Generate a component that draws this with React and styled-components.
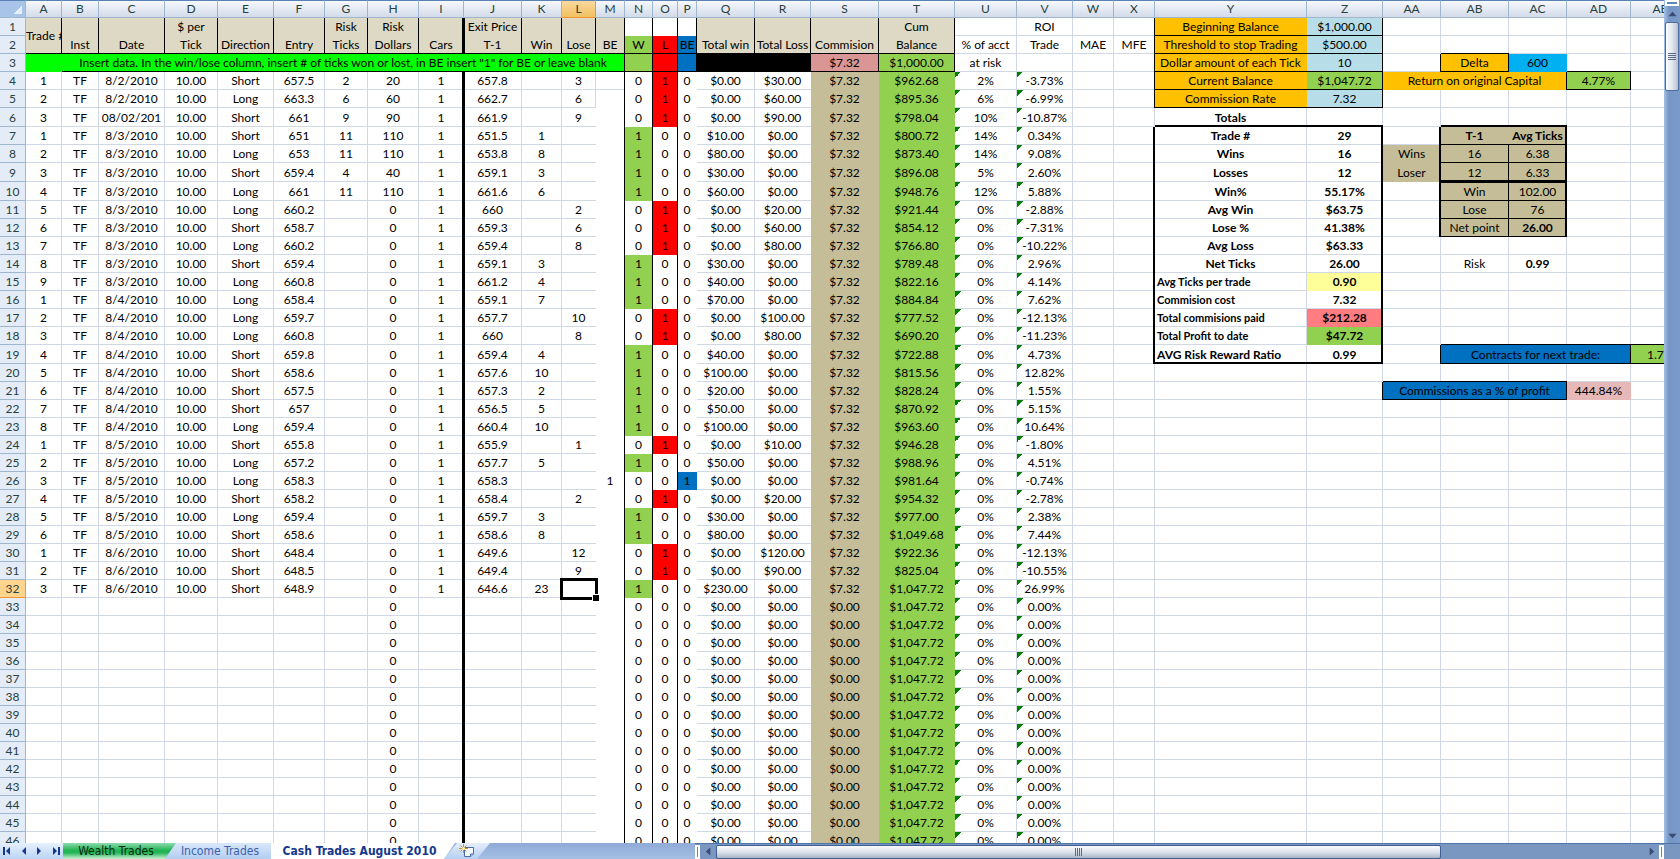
import React from "react";
import styled, { createGlobalStyle, css } from "styled-components";

const GRID = "#d0d7e5";
const SAND = "#ddd9c4";
const TAN = "#c4bd97";
const GREEN = "#92d050";
const RED = "#ff0000";
const BLUE = "#0070c0";
const GOLD = "#ffc000";
const SKY = "#b7dee8";
const LIME = "#00ff00";

const COLUMNS = [
  ["A", 36], ["B", 37], ["C", 66], ["D", 53], ["E", 56], ["F", 51], ["G", 43], ["H", 51],
  ["I", 45], ["J", 58], ["K", 40], ["L", 34], ["M", 29], ["N", 28], ["O", 25], ["P", 19],
  ["Q", 58], ["R", 56], ["S", 68], ["T", 76], ["U", 62], ["V", 56], ["W", 41], ["X", 41],
  ["Y", 152], ["Z", 76], ["AA", 58], ["AB", 68], ["AC", 58], ["AD", 64], ["AE", null],
];
const LETTERS = COLUMNS.map(([name]) => name);
const TALL_ROWS = [6, 9, 10, 19];
const ROW_COUNT = 46;
const ACTIVE = "L32";

/* trade, date, direction, entry, risk ticks, risk dollars, exit, win, lose, BE, total win, total loss, balance, at risk, ROI */
const TRADES = `
1|8/2/2010|Short|657.5|2|20|657.8||3||$0.00|$30.00|$962.68|2%|-3.73%
2|8/2/2010|Long|663.3|6|60|662.7||6||$0.00|$60.00|$895.36|6%|-6.99%
3|08/02/201|Short|661|9|90|661.9||9||$0.00|$90.00|$798.04|10%|-10.87%
1|8/3/2010|Short|651|11|110|651.5|1|||$10.00|$0.00|$800.72|14%|0.34%
2|8/3/2010|Long|653|11|110|653.8|8|||$80.00|$0.00|$873.40|14%|9.08%
3|8/3/2010|Short|659.4|4|40|659.1|3|||$30.00|$0.00|$896.08|5%|2.60%
4|8/3/2010|Long|661|11|110|661.6|6|||$60.00|$0.00|$948.76|12%|5.88%
5|8/3/2010|Long|660.2||0|660||2||$0.00|$20.00|$921.44|0%|-2.88%
6|8/3/2010|Short|658.7||0|659.3||6||$0.00|$60.00|$854.12|0%|-7.31%
7|8/3/2010|Long|660.2||0|659.4||8||$0.00|$80.00|$766.80|0%|-10.22%
8|8/3/2010|Short|659.4||0|659.1|3|||$30.00|$0.00|$789.48|0%|2.96%
9|8/3/2010|Long|660.8||0|661.2|4|||$40.00|$0.00|$822.16|0%|4.14%
1|8/4/2010|Long|658.4||0|659.1|7|||$70.00|$0.00|$884.84|0%|7.62%
2|8/4/2010|Long|659.7||0|657.7||10||$0.00|$100.00|$777.52|0%|-12.13%
3|8/4/2010|Long|660.8||0|660||8||$0.00|$80.00|$690.20|0%|-11.23%
4|8/4/2010|Short|659.8||0|659.4|4|||$40.00|$0.00|$722.88|0%|4.73%
5|8/4/2010|Short|658.6||0|657.6|10|||$100.00|$0.00|$815.56|0%|12.82%
6|8/4/2010|Short|657.5||0|657.3|2|||$20.00|$0.00|$828.24|0%|1.55%
7|8/4/2010|Short|657||0|656.5|5|||$50.00|$0.00|$870.92|0%|5.15%
8|8/4/2010|Long|659.4||0|660.4|10|||$100.00|$0.00|$963.60|0%|10.64%
1|8/5/2010|Short|655.8||0|655.9||1||$0.00|$10.00|$946.28|0%|-1.80%
2|8/5/2010|Long|657.2||0|657.7|5|||$50.00|$0.00|$988.96|0%|4.51%
3|8/5/2010|Long|658.3||0|658.3|||1|$0.00|$0.00|$981.64|0%|-0.74%
4|8/5/2010|Short|658.2||0|658.4||2||$0.00|$20.00|$954.32|0%|-2.78%
5|8/5/2010|Long|659.4||0|659.7|3|||$30.00|$0.00|$977.00|0%|2.38%
6|8/5/2010|Short|658.6||0|658.6|8|||$80.00|$0.00|$1,049.68|0%|7.44%
1|8/6/2010|Short|648.4||0|649.6||12||$0.00|$120.00|$922.36|0%|-12.13%
2|8/6/2010|Short|648.5||0|649.4||9||$0.00|$90.00|$825.04|0%|-10.55%
3|8/6/2010|Short|648.9||0|646.6|23|||$230.00|$0.00|$1,047.72|0%|26.99%`
  .trim()
  .split("\n")
  .map((line) => line.split("|"));

/* r, b, l, t are edge thicknesses: 0 hides the grid line, 1 or more draws black. */
const cells = {};
const set = (ref, props) => {
  cells[ref] = { ...cells[ref], ...props };
};

/* ledger header */
const HEADINGS = {
  B: ["", "Inst"], C: ["", "Date"], D: ["$ per", "Tick"], E: ["", "Direction"], F: ["", "Entry"],
  G: ["Risk", "Ticks"], H: ["Risk", "Dollars"], I: ["", "Cars"], J: ["Exit Price", "T-1"],
  K: ["", "Win"], L: ["", "Lose"], M: ["", "BE"], Q: ["", "Total win"], R: ["", "Total Loss"],
  S: ["", "Commision"], T: ["Cum", "Balance"],
};
set("A1", { v: "Trade #", fill: SAND, r: 1, b: 1, rows: 2, clip: true });
Object.entries(HEADINGS).forEach(([c, [top, bottom]]) => {
  set(c + 1, { v: top, fill: SAND, r: 1, b: 0 });
  set(c + 2, { v: bottom, fill: SAND, r: 1, b: 1 });
});
[["N", "W", GREEN], ["O", "L", RED], ["P", "BE", BLUE]].forEach(([c, v, fill]) => {
  set(c + 1, { r: 1, b: 0 });
  set(c + 2, { v, fill, r: 1, b: 1 });
  set(c + 3, { fill, r: 1, b: 1 });
});
set("A3", { fill: LIME, r: 0, b: 0 });
set("B3", {
  v: 'Insert data. In the win/lose column, insert # of ticks won or lost, in BE insert "1" for BE or leave blank',
  fill: LIME, span: 12, r: 1, b: 1,
});
set("Q3", { fill: "#000", r: 1, b: 1 });
set("R3", { fill: "#000", r: 1, b: 1 });
set("S3", { v: "$7.32", fill: "#da9694", r: 1, b: 1 });
set("T3", { v: "$1,000.00", fill: GREEN, r: 1, b: 1 });
set("U2", { v: "% of acct" });
set("U3", { v: "at risk" });
set("V1", { v: "ROI" });
set("V2", { v: "Trade" });
set("W2", { v: "MAE" });
set("X2", { v: "MFE" });
[1, 2].forEach((r) => set("I" + r, { r: 2 }));
[1, 2].forEach((r) => set("J" + r, { l: 1 }));

/* ledger body */
for (let r = 4; r <= ROW_COUNT; r += 1) {
  const t = TRADES[r - 4];
  const put = (c, v, more) => set(c + r, { v, ...more });
  if (t) {
    put("A", t[0]); put("B", "TF"); put("C", t[1]); put("D", "10.00"); put("E", t[2]);
    put("F", t[3]); put("G", t[4]); put("J", t[6]); put("K", t[7]);
  }
  put("H", t ? t[5] : "0");
  put("I", t ? "1" : "", { r: 2 });
  set("J" + r, { l: 1 });
  put("L", t ? t[8] : "", r > 5 ? { r: 0 } : {});
  put("M", t ? t[9] : "", { r: 1, ...(r > 4 ? { b: 0 } : {}) });
  const flag = (c, on, fill, edge) =>
    put(c, on ? "1" : "0", { fill: on ? fill : undefined, b: 0, r: edge });
  flag("N", t && t[7], GREEN, 1);
  flag("O", t && t[8], RED, 1);
  flag("P", t && t[9], BLUE, 0);
  put("Q", t ? t[10] : "$0.00");
  put("R", t ? t[11] : "$0.00", { r: 0 });
  put("S", t ? "$7.32" : "$0.00", { fill: TAN, r: 0, b: 0 });
  put("T", t ? t[12] : "$1,047.72", { fill: GREEN, r: 0, b: 0 });
  put("U", t ? t[13] : "0%", { flag: true });
  put("V", t ? t[14] : "0.00%", { flag: true });
}

/* account settings */
[
  ["Beginning Balance", "$1,000.00", SKY],
  ["Threshold to stop Trading", "$500.00", SKY],
  ["Dollar amount of each Tick", "10", SKY],
  ["Current Balance", "$1,047.72", GREEN],
  ["Commission Rate", "7.32", SKY],
].forEach(([label, value, fill], i) => {
  set("X" + (i + 1), { r: 1 });
  set("Y" + (i + 1), { v: label, fill: GOLD, r: 0, b: 1 });
  set("Z" + (i + 1), { v: value, fill, r: 1, b: 1 });
});

/* totals */
set("Y6", { v: "Totals", bold: true, b: 2 });
set("Z6", { b: 2 });
[
  ["Trade #", "29"], ["Wins", "16"], ["Losses", "12"], ["Win%", "55.17%"], ["Avg Win", "$63.75"],
  ["Lose %", "41.38%"], ["Avg Loss", "$63.33"], ["Net Ticks", "26.00"],
  ["Avg Ticks per trade", "0.90", "#ffff99"], ["Commision cost", "7.32"],
  ["Total commisions paid", "$212.28", "#ff7c80"], ["Total Profit to date", "$47.72", GREEN],
  ["AVG Risk Reward Ratio", "0.99"],
].forEach(([label, value, fill], i) => {
  const r = i + 7;
  set("X" + r, { r: 2 });
  set("Y" + r, { v: label, bold: true, left: r > 14, small: r > 14 && r < 19 });
  set("Z" + r, { v: value, bold: true, fill, r: 2, ...(fill ? { b: 0 } : {}) });
});
set("Y19", { b: 2 });
set("Z19", { b: 2 });

/* side panels */
set("AA3", { r: 1 });
set("AB2", { b: 1 });
set("AB3", { v: "Delta", fill: GOLD, r: 1, b: 1 });
set("AC3", { v: "600", fill: "#00b0f0", r: 0, b: 0 });
set("AD3", { b: 1 });
set("AA4", { v: "Return on original Capital", fill: GOLD, span: 3, r: 1, b: 0 });
set("AD4", { v: "4.77%", fill: GREEN, r: 1, b: 1 });
set("AB6", { b: 2 });
set("AC6", { b: 2 });
for (let r = 7; r <= 12; r += 1) set("AA" + r, { r: 2 });
set("AA8", { v: "Wins", fill: TAN, b: 0 });
set("AA9", { v: "Loser", fill: TAN, b: 0 });
[
  ["T-1", "Avg Ticks"], ["16", "6.38"], ["12", "6.33"],
  ["Win", "102.00"], ["Lose", "76"], ["Net point", "26.00"],
].forEach(([a, b], i) => {
  const r = i + 7;
  const edges = { fill: TAN, b: r === 9 ? 2 : 1, t: r === 10 ? 1 : undefined };
  set("AB" + r, { v: a, ...edges, r: r === 7 ? 0 : 1, bold: r === 7 });
  set("AC" + r, { v: b, ...edges, r: 2, bold: r === 7 || r === 12 });
});
set("AB14", { v: "Risk" });
set("AC14", { v: "0.99", bold: true });
["AB18", "AC18", "AD18", "AE18", "AA20", "AB20", "AC20"].forEach((ref) => set(ref, { b: 1 }));
set("AA19", { r: 1 });
set("AB19", { v: "Contracts for next trade:", fill: BLUE, span: 3, r: 1, b: 1 });
set("AE19", { v: "1.7", fill: GREEN, b: 1, left: true, indent: 16 });
set("Z21", { r: 1 });
set("AA21", { v: "Commissions as a % of profit", fill: BLUE, span: 3, r: 1, b: 1 });
set("AD21", { v: "444.84%", fill: "#e6b8b7", r: 0, b: 0 });

const Global = createGlobalStyle`
  * { box-sizing: border-box; }
  body { margin: 0; background: #fff; overflow: hidden; }
`;

const Workbook = styled.main`
  display: flex;
  flex-direction: column;
  height: 100vh;
  font: 12px/17px Lato, "Noto Sans", sans-serif;
  color: #000;
`;

const Pane = styled.div`
  display: flex;
  flex: 1;
  min-height: 0;
`;

const SheetView = styled.div`
  flex: 1;
  min-width: 0;
  overflow: hidden;
`;

const Sheet = styled.table`
  table-layout: fixed;
  width: 100%;
  min-width: 1690px;
  border-collapse: separate;
  border-spacing: 0;
`;

const Row = styled.tr`
  height: ${(p) => (p.$tall ? 19 : 18)}px;
`;

const ColumnHead = styled.th`
  height: 18px;
  padding: 0;
  font-weight: 400;
  line-height: 16px;
  color: #27413e;
  border-top: 1px solid #5b82b5;
  border-right: 1px solid ${(p) => (p.$active ? "#f29536" : "#9eb6ce")};
  border-bottom: 1px solid ${(p) => (p.$active ? "#f29536" : "#9eb6ce")};
  background: ${(p) =>
    p.$active ? "linear-gradient(#f9d99f, #f1c15f)" : "linear-gradient(#f6f9fd, #d3dbe9)"};
`;

const Corner = styled(ColumnHead)`
  background: linear-gradient(135deg, transparent 50%, #e6effa 50%) 14px 5px / 8px 8px no-repeat, #a9c4e9;
`;

const RowHead = styled.th`
  padding: 0;
  font-weight: 400;
  color: #27413e;
  vertical-align: bottom;
  border-right: 1px solid ${(p) => (p.$active ? "#f29536" : "#9eb6ce")};
  border-bottom: 1px solid ${(p) => (p.$active ? "#f29536" : "#9eb6ce")};
  background: ${(p) => (p.$active ? "#ffd58d" : "#e4ecf7")};
`;

/* Black edges come first so that they lie over the pale grid lines at the corners. */
const edges = (p) =>
  [
    p.$r > 0 && `inset -${p.$r}px 0 #000`,
    p.$b > 0 && `inset 0 -${p.$b}px #000`,
    p.$l && "inset 1px 0 #000",
    p.$t && "inset 0 1px #000",
    p.$r === undefined && `inset -1px 0 ${GRID}`,
    p.$b === undefined && `inset 0 -1px ${GRID}`,
  ]
    .filter(Boolean)
    .join(", ") || "none";

const Cell = styled.td`
  position: relative;
  padding: 0 1px 1px ${(p) => p.$indent || (p.$left ? 2 : 0)}px;
  text-align: ${(p) => (p.$left ? "left" : "center")};
  vertical-align: ${(p) => (p.$middle ? "middle" : "bottom")};
  white-space: nowrap;
  font-weight: ${(p) => (p.$bold ? 700 : 400)};
  font-size: ${(p) => (p.$small ? 11 : 12)}px;
  background: ${(p) => p.$fill || "#fff"};
  box-shadow: ${edges};
  ${(p) =>
    p.$flag &&
    css`
      background: linear-gradient(135deg, #008000 50%, transparent 50%) 0 0 / 6px 6px no-repeat, #fff;
    `}
`;

const Clip = styled.div`
  overflow: hidden;
`;

const Selection = styled.span`
  position: absolute;
  z-index: 1;
  inset: -2px;
  border: 3px solid #000;

  &::after {
    content: "";
    position: absolute;
    right: -4px;
    bottom: -4px;
    width: 6px;
    height: 6px;
    background: #000;
    border: 1px solid #fff;
    border-width: 1px 0 0 1px;
  }
`;

const VerticalBar = styled.div`
  display: flex;
  flex-direction: column;
  align-items: center;
  flex: none;
  width: 16px;
  background: linear-gradient(90deg, #a3c0e6, #7696c4 30%, #7a9bcb);
`;

const ScrollButton = styled.button`
  display: flex;
  flex: none;
  align-items: center;
  justify-content: center;
  width: 16px;
  height: 16px;
  padding: 0;
  border: 0;
  background: none;
`;

const SplitHandle = styled.div`
  flex: none;
  width: ${(p) => (p.$upright ? 5 : 14)}px;
  height: ${(p) => (p.$upright ? 14 : 6)}px;
  background: #fff;
  border: 2px solid #fff;
  box-shadow: inset 0 0 0 1px #5f86b8;
`;

const VerticalThumb = styled.div`
  display: flex;
  align-items: center;
  justify-content: center;
  width: 14px;
  height: 69px;
  border: 1px solid #4f6b9a;
  border-radius: 2px;
  background: linear-gradient(90deg, #fdfdfe, #e3e7ef 50%, #b5c0d3);
`;

const Spacer = styled.div`
  flex: 1;
`;

const BottomBar = styled.footer`
  display: flex;
  flex: none;
  height: 16px;
  background: linear-gradient(#8fabd6, #a5bfe4);
  overflow: hidden;
`;

const TabArea = styled.div`
  display: flex;
  flex: 695 1 0;
  min-width: 0;
`;

const Nav = styled.div`
  display: flex;
  width: 63px;
  flex: none;
  justify-content: space-around;
  background: linear-gradient(#e6f0fd, #bcd4f4);
`;

const NavButton = styled.button`
  width: 14px;
  padding: 0;
  border: 0;
  background: none;
  line-height: 0;
`;

const Tab = styled.button`
  position: relative;
  flex: none;
  width: ${(p) => p.$width}px;
  margin-right: -11px;
  padding: 0 11px 0 4px;
  border: 0;
  font: ${(p) => (p.$active ? 700 : 400)} 12px/16px "DejaVu Sans Condensed", "DejaVu Sans", sans-serif;
  color: ${(p) => (p.$green ? "#0b2a12" : p.$active ? "#15388a" : "#3a5fae")};
  white-space: nowrap;
  clip-path: polygon(${(p) => (p.$tucked ? "11px 0" : "0 0")}, 100% 0, calc(100% - 11px) 100%, 0 100%);
  background: ${(p) =>
    p.$green
      ? "linear-gradient(#8fdcae, #23b455 45%, #23b455 60%, #c8f0d5)"
      : p.$active
        ? "#fff"
        : "linear-gradient(#d9e8fb, #b3cdf0)"};
`;

const NewTab = styled.button`
  display: flex;
  align-items: center;
  justify-content: center;
  flex: none;
  width: 46px;
  padding: 0;
  border: 0;
  background: linear-gradient(#e4effd, #b5cff2);
  clip-path: polygon(13px 0, 100% 0, calc(100% - 13px) 100%, 0 100%);
`;

const HorizontalBar = styled.div`
  display: flex;
  flex: 985 1 0;
  min-width: 0;
  align-items: center;
  border-top: 1px solid #4f74a8;
  background: #7a97c2;
`;

const HorizontalThumb = styled.div`
  display: flex;
  align-items: center;
  justify-content: center;
  flex: 723 1 0;
  height: 14px;
  border: 1px solid #3f5f92;
  border-radius: 2px;
  background: linear-gradient(#fafbfd, #d9dfea 55%, #a9b5ca);
`;

const Track = styled.div`
  flex: 202 1 0;
`;

const BarEnd = styled.div`
  flex: none;
  width: 16px;
`;

const Arrow = ({ dir, color = "#3c4a6e", size = 9 }) => {
  const turn = { right: 0, down: 90, left: 180, up: 270 }[dir];
  return (
    <svg width={size} height={size} viewBox="0 0 10 10" aria-hidden="true">
      <path d="M3 0.5 L8 5 L3 9.5 Z" fill={color} transform={`rotate(${turn} 5 5)`} />
    </svg>
  );
};

const NavIcon = ({ end, flip }) => (
  <svg width="14" height="10" viewBox="0 0 14 10" aria-hidden="true">
    <g transform={flip ? "translate(14 0) scale(-1 1)" : undefined} fill="#15388a">
      <path d="M5 1 L9 5 L5 9 Z" />
      {end && <path d="M10 1 H12 V9 H10 Z" />}
    </g>
  </svg>
);

const Grip = ({ upright }) => (
  <svg width="8" height="8" viewBox="0 0 8 8" stroke="#5d6a85" aria-hidden="true">
    <path d={upright ? "M0.5 0V8M2.5 0V8M4.5 0V8M6.5 0V8" : "M0 0.5H8M0 2.5H8M0 4.5H8M0 6.5H8"} />
  </svg>
);

const NewSheetIcon = () => (
  <svg width="16" height="14" viewBox="0 0 16 14" aria-hidden="true">
    <path d="M5.5 3.5H14.5V10L11.5 12.5H5.5Z" fill="#f4f8ff" stroke="#4c6ca6" />
    <path d="M14.5 10H11.5V12.5" fill="#b5c9e8" stroke="#4c6ca6" />
    <path d="M4.5 0V9M0 4.5H9M1.5 1.5L7.5 7.5M7.5 1.5L1.5 7.5" stroke="#e08a1e" />
    <circle cx="4.5" cy="4.5" r="1.5" fill="#fff2b0" />
  </svg>
);

const SheetRow = ({ row }) => {
  const out = [];
  for (let i = 0; i < LETTERS.length; i += 1) {
    const ref = LETTERS[i] + row;
    if (ref === "A2") continue;
    const c = cells[ref] || {};
    out.push(
      <Cell
        key={ref}
        colSpan={c.span}
        rowSpan={c.rows}
        $fill={c.fill}
        $bold={c.bold}
        $small={c.small}
        $left={c.left}
        $indent={c.indent}
        $middle={c.clip}
        $flag={c.flag}
        $r={c.r}
        $b={c.b}
        $l={c.l}
        $t={c.t}
      >
        {c.clip ? <Clip>{c.v}</Clip> : c.v}
        {ref === ACTIVE && <Selection />}
      </Cell>
    );
    if (c.span) i += c.span - 1;
  }
  return (
    <Row $tall={TALL_ROWS.includes(row)}>
      <RowHead scope="row" $active={row === 32}>{row}</RowHead>
      {out}
    </Row>
  );
};

export default function App() {
  return (
    <Workbook>
      <Global />
      <Pane>
        <SheetView>
          <Sheet>
            <colgroup>
              <col width="26" />
              {COLUMNS.map(([name, width]) => (
                <col key={name} width={width || undefined} />
              ))}
            </colgroup>
            <thead>
              <tr>
                <Corner aria-label="Select all" />
                {LETTERS.map((name) => (
                  <ColumnHead key={name} scope="col" $active={name === "L"}>{name}</ColumnHead>
                ))}
              </tr>
            </thead>
            <tbody>
              {Array.from({ length: ROW_COUNT }, (_, i) => (
                <SheetRow key={i} row={i + 1} />
              ))}
            </tbody>
          </Sheet>
        </SheetView>
        <VerticalBar>
          <SplitHandle />
          <ScrollButton aria-label="Scroll up"><Arrow dir="up" /></ScrollButton>
          <VerticalThumb><Grip /></VerticalThumb>
          <Spacer />
          <ScrollButton aria-label="Scroll down"><Arrow dir="down" /></ScrollButton>
        </VerticalBar>
      </Pane>
      <BottomBar>
        <TabArea>
          <Nav>
            <NavButton aria-label="First sheet"><NavIcon end flip /></NavButton>
            <NavButton aria-label="Previous sheet"><NavIcon flip /></NavButton>
            <NavButton aria-label="Next sheet"><NavIcon /></NavButton>
            <NavButton aria-label="Last sheet"><NavIcon end /></NavButton>
          </Nav>
          <Tab $width={113} $green>Wealth Trades</Tab>
          <Tab $width={117} $tucked>Income Trades</Tab>
          <Tab $width={184} $active>Cash Trades August 2010</Tab>
          <NewTab aria-label="Insert worksheet"><NewSheetIcon /></NewTab>
        </TabArea>
        <HorizontalBar>
          <SplitHandle $upright />
          <ScrollButton aria-label="Scroll left"><Arrow dir="left" /></ScrollButton>
          <HorizontalThumb><Grip upright /></HorizontalThumb>
          <Track />
          <ScrollButton aria-label="Scroll right"><Arrow dir="right" /></ScrollButton>
          <SplitHandle $upright />
          <BarEnd />
        </HorizontalBar>
      </BottomBar>
    </Workbook>
  );
}
